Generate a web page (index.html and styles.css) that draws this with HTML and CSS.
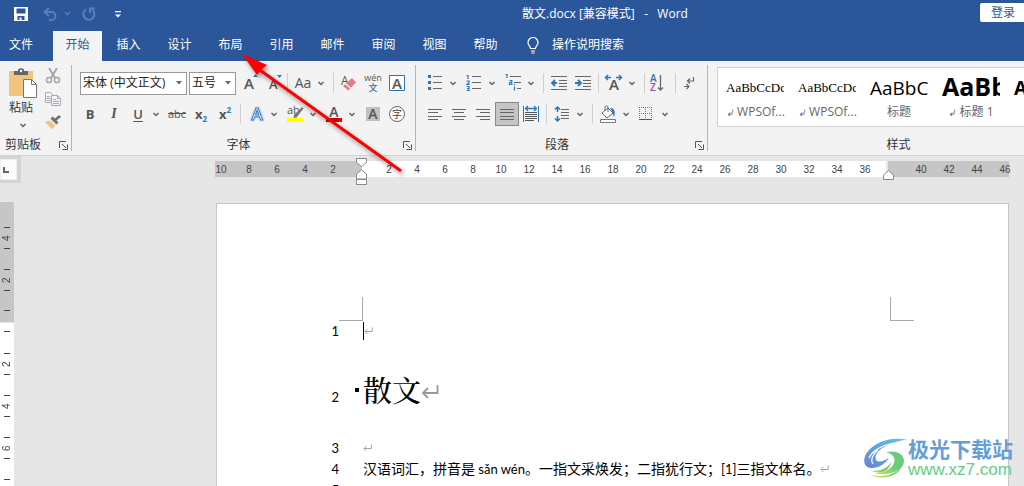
FILE: index.html
```html
<!DOCTYPE html>
<html lang="zh-CN">
<head>
<meta charset="utf-8">
<title>散文.docx [兼容模式] - Word</title>
<link rel="stylesheet" href="styles.css">
</head>
<body>
<svg class="defs" aria-hidden="true">
  <symbol id="chev" viewBox="0 0 12 24"><path d="M3.500 11l2.500 2.500L8.500 11" fill="none" stroke="#666" stroke-width="1.500"/></symbol>
  <symbol id="launch" viewBox="0 0 9 9"><path d="M.5 7V.5H7M3 3l4 4M8.500 3.500v5h-5" fill="none" stroke="#555"/></symbol>
  <symbol id="ret" viewBox="0 0 18 16"><path d="M16.500 1v8H2M7 4L2 9l5 5" fill="none" stroke="#999" stroke-width="1.800"/></symbol>
</svg>
<header class="header">
  <div class="titlebar">
    <div class="quick">
      <button class="q" aria-label="保存"><svg width="14" height="14"><path d="M0 0h14v14H0zM2.500 1.500v5h9v-5zM3.500 9v4h2v-2.500h2V13h3V9z" fill="#fff" fill-rule="evenodd"/></svg></button>
      <button class="q" aria-label="撤消"><svg width="28" height="14"><path d="M6 1L1.500 5 6 9M2 5h6.500a4 4 0 010 8H6" fill="none" stroke="#5b80b9" stroke-width="2"/><path d="M22 5l2.500 2.500L27 5" fill="none" stroke="#5b80b9" stroke-width="1.300"/></svg></button>
      <button class="q redo" aria-label="恢复"><svg width="14" height="14"><path d="M4 2.500A5.500 5.500 0 1010.500 3M8 6V1.500h5" fill="none" stroke="#5b80b9" stroke-width="2"/></svg></button>
      <button class="q more" aria-label="自定义快速访问工具栏"><svg width="6" height="7"><path d="M0 0h6v1.300H0zM0 3.500h6L3 6.500z" fill="#fff"/></svg></button>
    </div>
    <h1 class="doctitle">散文.docx [兼容模式] &nbsp;&nbsp;-&nbsp;&nbsp; Word</h1>
    <button class="login">登录</button>
  </div>
  <nav class="tabs">
    <button class="tab file">文件</button>
    <button class="tab active">开始</button>
    <button class="tab">插入</button>
    <button class="tab">设计</button>
    <button class="tab">布局</button>
    <button class="tab">引用</button>
    <button class="tab">邮件</button>
    <button class="tab">审阅</button>
    <button class="tab">视图</button>
    <button class="tab">帮助</button>
    <label class="tell"><svg width="12" height="17"><path d="M3.500 11.500C3.500 9 1 8.500 1 5.500a5 5 0 0110 0c0 3-2.500 3.500-2.500 6zM4 14h4M4.500 16h3" fill="none" stroke="#fff" stroke-width="1.200"/></svg><input type="text" placeholder="操作说明搜索" aria-label="操作说明搜索"></label>
  </nav>
</header>

<section class="ribbon">
  <div class="group clip">
    <div class="clipbody">
      <button class="paste"><svg width="28" height="30"><path d="M0 3h24v25H0z" fill="#eec680"/><path d="M5 3h4V1.500Q12 -1 15 1.500V3h4v4H5z" fill="#666"/><circle cx="12" cy="3" r="1.200" fill="#fff"/><path d="M14.500 11.500h8l5 5v13h-13z" fill="#fff" stroke="#777"/><path d="M22.500 11.500v5h5" fill="none" stroke="#777"/></svg><span>粘贴</span><svg width="12" height="14" viewBox="0 5 12 14"><use href="#chev" width="12" height="24"/></svg></button>
      <div class="clipcol">
        <button class="small" aria-label="剪切"><svg width="16" height="16"><path d="M4 0l6 10M12 0L6 10" stroke="#a6a6a6" stroke-width="2" fill="none"/><circle cx="4" cy="12" r="2.600" fill="none" stroke="#a6a6a6" stroke-width="1.500"/><circle cx="12" cy="12" r="2.600" fill="none" stroke="#a6a6a6" stroke-width="1.500"/></svg></button>
        <button class="small" aria-label="复制"><svg width="16" height="16"><path d="M.5 1.500h5l3 3v7h-8z" fill="#f3f3f3" stroke="#b0a8b4"/><path d="M2 5.500h3M2 7.500h4M2 9.500h4" stroke="#b0a8b4"/><path d="M6.500 4.500h6l3 3v7h-9z" fill="#f3f3f3" stroke="#b0a8b4"/><path d="M8 8.500h3M8 10.500h6M8 12.500h6M12.500 4.500v3h3" fill="none" stroke="#b0a8b4"/></svg></button>
        <button class="small" aria-label="格式刷"><svg width="16" height="16"><path d="M0 8l6-2 5 5-4 4.500z" fill="#eec680"/><path d="M5.500 4.500l6 6 2-2-2-2L16 3l-2-2-4 3.500-2.500-2z" fill="#707070"/><path d="M5 6l5.500 5.500" stroke="#f3f3f3"/></svg></button>
      </div>
    </div>
    <footer class="caption"><span>剪贴板</span><button class="launch" aria-label="剪贴板设置"><svg width="9" height="9"><use href="#launch"/></svg></button></footer>
  </div>

  <div class="group font">
    <div class="row">
      <span class="combo family"><select aria-label="字体"><option>宋体 (中文正文)</option></select><svg width="8" height="4"><path d="M1 0h6L4 3.500z" fill="#666"/></svg></span>
      <span class="combo size"><select aria-label="字号"><option>五号</option></select><svg width="8" height="4"><path d="M1 0h6L4 3.500z" fill="#666"/></svg></span>
      <button class="tool" aria-label="增大字号"><svg width="24" height="24"><text x="8" y="18" class="gb" font-size="15">A</text><path d="M17 6h5l-2.500-3z" fill="#2e75b6"/></svg></button>
      <button class="tool" aria-label="减小字号"><svg width="24" height="24"><text x="9" y="18" class="gb" font-size="13">A</text><path d="M17 4h5l-2.500 3z" fill="#2e75b6"/></svg></button>
      <i class="sep"></i>
      <button class="tool aa">Aa</button><button class="drop" aria-label="更改大小写"><svg><use href="#chev"/></svg></button>
      <i class="sep"></i>
      <button class="tool" aria-label="清除格式"><svg width="24" height="24"><text x="4" y="14" class="ga" font-size="12">A</text><path d="M15 7l4 4.500-8 8-5-4.500z" fill="#e8798c"/><path d="M8 12.500l6 5" stroke="#f3f3f3" stroke-width="1.200"/></svg></button>
      <button class="tool ruby" aria-label="拼音指南"><span>wén</span><b>文</b></button>
      <button class="tool" aria-label="字符边框"><svg width="24" height="24"><path d="M4.500 4.500h15v15h-15z" fill="#fff" stroke="#2e75b6"/><text x="12" y="17.500" text-anchor="middle" class="gb" font-size="15">A</text></svg></button>
    </div>
    <div class="row second">
      <button class="tool bold">B</button>
      <button class="tool ital">I</button>
      <button class="tool under">U</button><button class="drop" aria-label="下划线"><svg><use href="#chev"/></svg></button>
      <button class="tool strike">abc</button>
      <button class="tool scr">x<sub>2</sub></button>
      <button class="tool scr">x<sup>2</sup></button>
      <i class="sep"></i>
      <button class="tool" aria-label="文本效果"><svg width="24" height="24"><text x="13" y="18" text-anchor="middle" font-size="17" class="fx">A</text></svg></button><button class="drop" aria-label="文本效果选项"><svg><use href="#chev"/></svg></button>
      <button class="tool" aria-label="突出显示"><svg width="24" height="24"><text x="4" y="12" class="ga" font-size="11">ab</text><path d="M19 5l1.500 1.500-7 9-3 .5.500-3z" fill="#777"/><path d="M4 16h16v4H4z" fill="#ff0"/></svg></button><button class="drop" aria-label="突出显示颜色"><svg><use href="#chev"/></svg></button>
      <button class="tool" aria-label="字体颜色"><svg width="24" height="24"><text x="12" y="15" text-anchor="middle" class="gb" font-size="14">A</text><path d="M4 16h16v4H4z" fill="#d80000"/></svg></button><button class="drop" aria-label="更多字体颜色"><svg><use href="#chev"/></svg></button>
      <button class="tool" aria-label="字符底纹"><svg width="24" height="24"><path d="M5 5h14v14H5z" fill="#c0c0c0"/><text x="12" y="17" text-anchor="middle" class="gb" font-size="14">A</text></svg></button>
      <button class="tool" aria-label="带圈字符"><svg width="24" height="24"><circle cx="12" cy="12" r="7.500" fill="#fff" stroke="#666"/><text x="12" y="16" text-anchor="middle" class="zh" font-size="10">字</text></svg></button>
    </div>
    <footer class="caption"><span>字体</span><button class="launch" aria-label="字体设置"><svg width="9" height="9"><use href="#launch"/></svg></button></footer>
  </div>

  <div class="group para">
    <div class="row">
      <button class="tool" aria-label="项目符号"><svg width="24" height="24"><path d="M10 5.500h9M10 11.500h9M10 17.500h9" stroke="#666"/><path d="M5 4h3v3H5zM5 10h3v3H5zM5 16h3v3H5z" fill="#2e75b6"/></svg></button><button class="drop" aria-label="项目符号库"><svg><use href="#chev"/></svg></button>
      <button class="tool" aria-label="编号"><svg width="24" height="24"><path d="M10 5.500h9M10 11.500h9M10 17.500h9" stroke="#666"/><path d="M4.500 4.500H6V8M4.500 10H7v1.500L5 13.500h2.500M4.500 15.500H7v4H4.500M5 17.500h2" fill="none" stroke="#2e75b6" stroke-width="1.200"/></svg></button><button class="drop" aria-label="编号库"><svg><use href="#chev"/></svg></button>
      <button class="tool" aria-label="多级列表"><svg width="24" height="24"><path d="M9 5.500h11M13 11.500h7M16 17.500h4" stroke="#666"/><path d="M4.500 3.500H6V7M8.500 9.500h2.300v4H8.500v-2h2M13.500 15.500v4M13.500 13v1.300" fill="none" stroke="#2e75b6" stroke-width="1.200"/></svg></button><button class="drop" aria-label="列表库"><svg><use href="#chev"/></svg></button>
      <i class="sep"></i>
      <button class="tool" aria-label="减少缩进量"><svg width="24" height="24"><path d="M4 5.500h16M12 9.500h8M12 12.500h8M12 15.500h8M4 18.500h16" stroke="#666"/><path d="M10 12H6M8 9l-3 3 3 3" fill="none" stroke="#2e75b6" stroke-width="1.800"/></svg></button>
      <button class="tool" aria-label="增加缩进量"><svg width="24" height="24"><path d="M4 5.500h16M12 9.500h8M12 12.500h8M12 15.500h8M4 18.500h16" stroke="#666"/><path d="M4 12h5M7 9l3 3-3 3" fill="none" stroke="#2e75b6" stroke-width="1.800"/></svg></button>
      <i class="sep"></i>
      <button class="tool" aria-label="中文版式"><svg width="24" height="24"><text x="12" y="19" text-anchor="middle" class="gb" font-size="15">A</text><path d="M4 6.500h5M6 4L3.500 6.500 6 9M14 6.500h5M17 4l2.500 2.500L17 9" fill="none" stroke="#2e75b6" stroke-width="1.500"/></svg></button><button class="drop" aria-label="中文版式选项"><svg><use href="#chev"/></svg></button>
      <i class="sep"></i>
      <button class="tool" aria-label="排序"><svg width="24" height="24"><text x="2" y="11" font-size="10" class="gb" fill="#2e75b6">A</text><text x="2" y="20" font-size="10" class="gb" fill="#8b4fa8">Z</text><path d="M12.500 4v15M10 16.500l2.500 2.500 2.500-2.500" fill="none" stroke="#666" stroke-width="1.300"/></svg></button>
      <i class="sep"></i>
      <button class="tool" aria-label="显示编辑标记"><svg width="24" height="24"><path d="M14.500 6v4H9M11 7.500L8.500 10l2.500 2.500M5 15.500h5M7.500 13l2.500 2.500L7.500 18" fill="none" stroke="#666" stroke-width="1.200"/></svg></button>
    </div>
    <div class="row second">
      <button class="tool" aria-label="左对齐"><svg width="24" height="24"><path d="M5 7.500h14M5 10.500h10M5 14.500h14M5 17.500h10" stroke="#666"/></svg></button>
      <button class="tool" aria-label="居中"><svg width="24" height="24"><path d="M5 7.500h14M7 10.500h10M5 14.500h14M7 17.500h10" stroke="#666"/></svg></button>
      <button class="tool" aria-label="右对齐"><svg width="24" height="24"><path d="M5 7.500h14M9 10.500h10M5 14.500h14M9 17.500h10" stroke="#666"/></svg></button>
      <button class="tool on" aria-label="两端对齐"><svg width="24" height="24"><path d="M5 7.500h14M5 10.500h14M5 14.500h14M5 17.500h14" stroke="#666"/></svg></button>
      <button class="tool" aria-label="分散对齐"><svg width="24" height="24"><path d="M4.500 4v16M19.500 4v16" stroke="#2e75b6"/><path d="M7 6.500h10M9 4L6.500 6.500 9 9M15 4l2.500 2.500L15 9" fill="none" stroke="#2e75b6" stroke-width="1.300"/><path d="M6 10.500h12M6 12.500h12M6 14.500h12M6 16.500h12M6 18.500h9" stroke="#555"/></svg></button>
      <i class="sep"></i>
      <button class="tool" aria-label="行和段落间距"><svg width="24" height="24"><path d="M11 7.500h8M11 10.500h8M11 13.500h8M11 16.500h8" stroke="#666"/><path d="M7.500 5v5M7.500 14v5M5 7.500L7.500 5 10 7.500M5 16.500L7.500 19l2.500-2.500" fill="none" stroke="#2e75b6" stroke-width="1.500"/></svg></button><button class="drop" aria-label="间距选项"><svg><use href="#chev"/></svg></button>
      <i class="sep"></i>
      <button class="tool" aria-label="底纹"><svg width="24" height="24"><path d="M6 11l6-5 5 5-6 5zM9 9V5.500a1.500 1.500 0 013 0V10" fill="#fff" stroke="#666"/><path d="M14 6c4 0 6 3 4 9-1-3-1-5-4-9z" fill="#2e75b6"/><path d="M4.500 17.500h15v3h-15z" fill="#fff" stroke="#777"/></svg></button><button class="drop" aria-label="底纹颜色"><svg><use href="#chev"/></svg></button>
      <button class="tool" aria-label="边框"><svg width="24" height="24"><path d="M4 5.500h14M4 11.500h14M4.500 5v12M10.500 5v12M16.500 5v12" stroke="#777" stroke-dasharray="1 1"/><path d="M4 17.500h13" stroke="#555"/></svg></button><button class="drop" aria-label="边框选项"><svg><use href="#chev"/></svg></button>
    </div>
    <footer class="caption"><span>段落</span><button class="launch" aria-label="段落设置"><svg width="9" height="9"><use href="#launch"/></svg></button></footer>
  </div>

  <div class="group styles">
    <div class="gallery">
      <button class="style"><span class="sample serif">AaBbCcDd</span><span class="name"><i>↲</i> WPSOf...</span></button>
      <button class="style"><span class="sample serif">AaBbCcDd</span><span class="name"><i>↲</i> WPSOf...</span></button>
      <button class="style"><span class="sample mid">AaBbC</span><span class="name">标题</span></button>
      <button class="style"><span class="sample big">AaBb</span><span class="name"><i>↲</i> 标题 1</span></button>
      <button class="style"><span class="sample mid2">AaBb</span><span class="name"></span></button>
    </div>
    <footer class="caption"><span>样式</span></footer>
  </div>
</section>

<main class="workspace">
  <aside class="side">
    <div class="tabstop"><button aria-label="左对齐制表符"><svg width="6" height="6"><path d="M1 0v5h5" fill="none" stroke="#666" stroke-width="2"/></svg></button></div>
    <div class="vruler">
      <div class="vmargin"><span>4</span><span>2</span></div>
      <div class="vbody"><span></span><span>2</span><span>4</span><span>6</span><span>8</span></div>
    </div>
  </aside>
  <div class="canvas">
    <div class="hruler">
      <span>10</span><span>8</span><span>6</span><span>4</span><span>2</span><span></span><span>2</span><span>4</span><span>6</span><span>8</span><span>10</span><span>12</span><span>14</span><span>16</span><span>18</span><span>20</span><span>22</span><span>24</span><span>26</span><span>28</span><span>30</span><span>32</span><span>34</span><span>36</span><span></span><span>40</span><span>42</span><span>44</span><span>46</span>
      <svg class="indent first" width="12" height="28"><path d="M.5.500h10v4l-5 4-5-4zM.5 17v-1l5-4 5 4v5H.5zM.5 21.500h10v5H.5z" fill="#fff" stroke="#888"/></svg>
      <svg class="indent last" width="12" height="11"><path d="M.5 9.500V5l5-4.500 5 4.500v4.500z" fill="#fff" stroke="#888"/></svg>
    </div>
    <article class="paper">
      <div class="crops"><i class="crop tl"></i><i class="crop tr"></i></div>
      <div class="line"><span class="no">1</span><p class="caret"><svg class="ret" viewBox="0 0 18 16"><use href="#ret" width="18" height="16"/></svg></p></div>
      <div class="line heading"><span class="no">2</span><h2>散文<svg class="ret large" viewBox="0 0 18 16"><use href="#ret" width="18" height="16"/></svg></h2></div>
      <div class="line"><span class="no">3</span><p><svg class="ret" viewBox="0 0 18 16"><use href="#ret" width="18" height="16"/></svg></p></div>
      <div class="line"><span class="no">4</span><p>汉语词汇，拼音是<span class="lat"> sǎn wén</span>。一指文采焕发；二指犹行文；<span class="lat">[1]</span>三指文体名。<svg class="ret" viewBox="0 0 18 16"><use href="#ret" width="18" height="16"/></svg></p></div>
      <div class="line"><span class="no">5</span><p><svg class="ret" viewBox="0 0 18 16"><use href="#ret" width="18" height="16"/></svg></p></div>
    </article>
  </div>
</main>

<svg class="pointer" width="180" height="140" aria-hidden="true"><path d="M26 18L170 121" stroke="#f00" stroke-width="3"/><path d="M11 4l25 11-5 4-5 6z" fill="#f00"/></svg>

<div class="brand">
  <svg width="44" height="40" viewBox="0 0 44 40">
    <defs><linearGradient id="bl" x1="0" y1="1" x2="1" y2="0"><stop offset="0" stop-color="#6c84d0"/><stop offset=".5" stop-color="#5fa3e0"/><stop offset="1" stop-color="#62c3f0"/></linearGradient><linearGradient id="gr" x1="0" y1="1" x2="1" y2="0"><stop offset="0" stop-color="#e5e94f"/><stop offset=".5" stop-color="#6ccb78"/><stop offset="1" stop-color="#6cc98a"/></linearGradient></defs>
    <path d="M44 2C26-2 9 5 2 16c-4 8-1 14 6 14 7 0 14-5 17-10-5 3-11 5-13 2-2-5 3-11 12-15C30 4 37 2 44 2z" fill="url(#bl)"/>
    <path d="M30 5C18 7 8 13 5 20M9 26c-3-4 0-10 5-14" fill="none" stroke="#fff" stroke-width="1.200"/>
    <path d="M22 14c9-2 18 1 18 9 0 10-17 16-30 12 10 0 18-4 20-10 2-6-2-9-8-11z" fill="url(#gr)"/>
    <path d="M5 36c7 3 23 4 33-7-5 10-22 14-33 7zM8 33c9 0 16-3 19-9-1 8-9 13-19 9z" fill="url(#gr)"/>
  </svg>
  <div class="brandtext"><strong>极光下载站</strong><span>www.xz7.com</span></div>
</div>
</body>
</html>
```
FILE: styles.css
```css
* { box-sizing: border-box; }
body {
  margin: 0;
  height: 100vh;
  display: flex;
  flex-direction: column;
  position: relative;
  overflow: hidden;
  background: #e6e6e6;
  color: #333;
  font: 12px/16px "Open Sans", "Noto Sans CJK SC", sans-serif;
}
button, input, select {
  margin: 0;
  padding: 0;
  border: 0;
  background: none;
  color: inherit;
  font: inherit;
}
h1, h2, p { margin: 0; font-weight: 400; }
svg { display: block; flex: none; }
.defs { position: absolute; width: 0; height: 0; }

/* Header */
.header { background: #2b579a; color: #fff; flex: none; }
.titlebar { display: flex; height: 31px; align-items: flex-start; }
.quick { display: flex; align-items: center; height: 28px; padding-left: 14px; gap: 15px; width: 140px; }
.q.redo { margin-left: -4px; }
.q.more { padding-left: 4px; }
.doctitle { flex: 1; font-size: 12px; line-height: 28px; padding-left: 90px; text-align: center; white-space: nowrap; }
.login { background: #fff; color: #2b579a; width: 46px; height: 19px; margin: 3px -2px 0 0; border-radius: 2px; line-height: 18px; }
.tabs { display: flex; gap: 2px; height: 30px; }
.tab { width: 49px; line-height: 28px; padding-bottom: 2px; }
.tab.file { width: 42px; margin-right: 9px; }
.tab.active { background: #f3f3f3; color: #2b579a; }
.tell { display: flex; align-items: center; gap: 13px; padding: 0 0 2px 15px; }
.tell input { width: 100px; }
.tell input::placeholder { color: #fff; opacity: 1; }

/* Ribbon */
.ribbon { display: flex; flex: none; height: 95px; background: #f3f3f3; border-bottom: 1px solid #d2d2d2; overflow: hidden; padding-top: 4px; }
.group { display: flex; flex-direction: column; flex: none; height: 86px; border-right: 1px solid #b5b5b5; }
.clip { width: 72px; }
.font { width: 344px; padding-left: 6px; }
.para { width: 292px; padding-left: 7px; }
.styles { flex: 1 0 372px; padding-left: 9px; border-right: 0; }
.caption { display: flex; height: 16px; margin-top: auto; margin-bottom: -2px; align-items: center; text-align: center; line-height: 16px; }
.caption span { flex: 1; }
.launch { width: 16px; padding-left: 4px; }
.clip .caption span { text-align: left; padding-left: 5px; }
.clipbody { display: flex; gap: 7px; padding: 3px 0 0 9px; }
.paste { display: flex; flex-direction: column; align-items: flex-start; width: 29px; }
.paste span { line-height: 20px; }
.paste svg:last-child { margin-left: 8px; }
.clipcol { display: flex; flex-direction: column; gap: 7px; }
.small { width: 16px; height: 16px; }
.row { display: flex; align-items: center; height: 24px; margin-top: 6px; }
.row.second { margin-top: 7px; }
.tool { display: flex; align-items: center; justify-content: center; width: 24px; height: 24px; flex: none; color: #555; }
.drop { width: 12px; height: 24px; margin-right: 3px; flex: none; }
.drop svg { width: 12px; height: 24px; }
.sep { width: 1px; height: 20px; margin: 0 3px; background: #d0d0d0; flex: none; }
.tool.on { background: #c5c5c5; border: 1px solid #888; }
.combo { display: grid; align-items: center; height: 23px; border: 1px solid #999; background: #fff; }
.combo select, .combo svg { grid-area: 1 / 1; }
.combo select { appearance: none; width: 100%; height: 21px; padding-left: 2px; color: #222; outline: 0; }
.combo svg { justify-self: end; margin-right: 3px; pointer-events: none; }
.family { width: 107px; margin: 0 2px; }
.size { width: 47px; }
.ga { fill: #555; font-family: "Open Sans", sans-serif; }
.gb { font-family: "Open Sans", sans-serif; font-weight: 600; }
.gb:not([fill]) { fill: #555; }
.zh { fill: #444; font-family: "Noto Sans CJK SC", sans-serif; }
.fx { fill: #fff; stroke: #3d7cba; stroke-width: 1px; font-family: "Open Sans", sans-serif; font-weight: 600; filter: drop-shadow(0 0 1px #7fb2e5); }
.aa { font-size: 14px; }
.ruby { flex-direction: column; font-size: 9px; line-height: 10px; }
.ruby b { color: #2e75b6; font-size: 9px; font-weight: 500; }
.bold { font-weight: 700; font-size: 13px; }
.ital { font: italic 600 14px "Liberation Serif", serif; }
.under { font-weight: 600; font-size: 13px; text-decoration: underline; text-underline-offset: 2px; }
.strike { font-size: 11px; text-decoration: line-through; }
.scr { font-weight: 700; font-size: 13px; }
.scr sub, .scr sup { font-size: 8px; line-height: 8px; color: #2e75b6; }
.scr sub { align-self: flex-end; margin-bottom: 3px; }
.scr sup { align-self: flex-start; margin-top: 4px; }

/* Style gallery */
.gallery { display: flex; height: 60px; margin-top: 2px; padding-left: 1px; border: 1px solid #d0d0d0; background: #fff; }
.style { display: flex; flex-direction: column; width: 72px; padding: 0 7px; flex: none; }
.sample { width: 100%; height: 36px; overflow: hidden; white-space: nowrap; text-align: left; color: #000; line-height: 40px; }
.serif { font-family: "Liberation Serif", serif; font-size: 13px; }
.mid { font-size: 19px; }
.big { font-size: 25px; font-weight: 700; line-height: 36px; }
.mid2 { font-size: 19px; font-weight: 700; }
.name { width: 100%; color: #666; text-align: center; white-space: nowrap; }
.name i { font-size: 9px; }

/* Rulers */
.workspace { flex: 1; display: flex; min-height: 0; overflow: hidden; }
.side { width: 21px; flex: none; }
.tabstop { height: 27px; background: #d4d4d4; padding: 3px 4px 3px 0; }
.tabstop button { width: 100%; height: 21px; padding-left: 2px; background: #fcfcfc; border: 1px solid #eee; }
.vruler { width: 14px; margin-top: 19px; color: #444; font: 10px/14px "Liberation Sans", sans-serif; }
.vmargin { height: 120px; padding-top: 15px; background: #c6c6c6; }
.vbody { margin-top: 1px; background: #fff; }
.vruler span {
  display: block;
  width: 14px;
  height: 42px;
  writing-mode: vertical-rl;
  text-align: center;
  transform: rotate(180deg);
  background: linear-gradient(#444, #444) 4px 10px / 6px 1px no-repeat, linear-gradient(#444, #444) 4px 31px / 6px 1px no-repeat;
}
.vmargin::after { content: ""; display: block; width: 6px; height: 1px; margin: 9px 0 0 4px; background: #444; }
.vbody span:first-child { height: 20px; background-position: 4px 11px, 4px 60px; }
.canvas { flex: 1; min-width: 0; display: flex; flex-direction: column; align-items: flex-end; padding: 5px 15px 0 0; }
.hruler {
  position: relative;
  display: flex;
  flex: none;
  width: 794px;
  height: 16px;
  color: #444;
  font: 10px/17px "Liberation Sans", sans-serif;
  background: linear-gradient(90deg, #c6c6c6 147px, #fff 147px, #fff 671px, #e6e6e6 671px, #e6e6e6 673px, #c6c6c6 673px);
}
.hruler span { width: 28px; flex: none; text-align: center; }
.hruler span:first-child { margin-left: -8px; }
.indent { position: absolute; }
.indent.first { left: 141px; top: -3px; }
.indent.last { left: 668px; top: 9px; }

/* Page */
.paper { width: 793px; flex: 1 0 auto; margin-top: 26px; padding: 93px 94px 0; background: #fff; border: 1px solid #c6c6c6; border-bottom: 0; color: #000; }
.crops { display: flex; justify-content: space-between; padding-left: 28px; }
.crop { width: 24px; height: 24px; border: 0 solid #aaa; border-bottom-width: 1px; }
.tl { border-right-width: 1px; }
.tr { border-left-width: 1px; }
.line { display: grid; grid-template-columns: 28px 1fr; column-gap: 24px; align-items: baseline; height: 21px; font: 14px/21px Lato, "Noto Sans CJK SC", sans-serif; }
.no { text-align: right; font-size: 13px; }
.lat { font-size: 13px; }
.line p { white-space: nowrap; }
.ret { display: inline-block; width: 9px; height: 8px; vertical-align: 1px; }
.caret { border-left: 1px solid #000; height: 18px; line-height: 18px; }
.heading { height: 95px; }
.heading h2 { position: relative; font: 500 29px/95px "Noto Serif CJK SC", "Noto Sans CJK SC", serif; }
.heading h2::before { content: ""; position: absolute; left: -8px; top: 46px; width: 4px; height: 4px; background: #000; }
.ret.large { width: 18px; height: 16px; vertical-align: 2px; }

/* Overlays */
.pointer { position: absolute; left: 231px; top: 50px; filter: drop-shadow(2px 3px 2px #0006); }
.brand { position: absolute; right: 11px; bottom: 6px; display: flex; align-items: center; }
.brandtext { display: flex; flex-direction: column; width: 105px; }
.brandtext strong { color: #659ddb; font: 700 21px/24px "Noto Sans CJK SC", sans-serif; }
.brandtext span { color: #67cb86; font: 400 17px/20px "Liberation Sans", sans-serif; }
```
